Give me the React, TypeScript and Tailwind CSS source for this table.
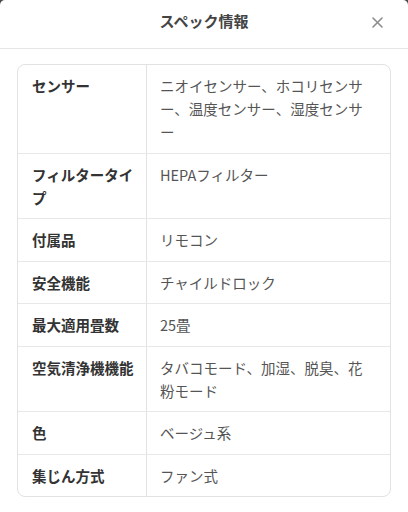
import React from 'react';

const SPECS = [
  { label: 'センサー', value: 'ニオイセンサー、ホコリセンサー、温度センサー、湿度センサー' },
  { label: 'フィルタータイプ', value: 'HEPAフィルター' },
  { label: '付属品', value: 'リモコン' },
  { label: '安全機能', value: 'チャイルドロック' },
  { label: '最大適用畳数', value: '25畳' },
  { label: '空気清浄機機能', value: 'タバコモード、加湿、脱臭、花粉モード' },
  { label: '色', value: 'ベージュ系' },
  { label: '集じん方式', value: 'ファン式' },
];

export default function App() {
  return (
    <div
      className="w-[408px] h-[512px] bg-[#4a4a4a] overflow-hidden"
      style={{ fontFamily: '"Noto Sans CJK JP", "Noto Sans", sans-serif' }}
    >
      <div className="h-full bg-white rounded-t-[5px]">
        {/* header */}
        <div className="relative flex items-center justify-center h-[49px] pb-[5px] border-b border-[#e6e6e6]">
          <h2 className="text-[15px] font-bold text-[#444]">スペック情報</h2>
          <button className="absolute right-[25px] top-[17px] text-[#8c8c8c]" aria-label="閉じる">
            <svg width="11" height="11" viewBox="0 0 11 11" fill="none" stroke="currentColor" strokeWidth="1.6" strokeLinecap="round">
              <path d="M1 1L10 10M10 1L1 10" />
            </svg>
          </button>
        </div>

        {/* spec table */}
        <div className="mx-[17px] mt-[15px] border border-[#e2e2e2] rounded-[8px] overflow-hidden">
          {SPECS.map((s, i) => (
            <div key={s.label} className={`flex ${i > 0 ? 'border-t border-[#e8e8e8]' : ''}`}>
              <div className="w-[129px] shrink-0 border-r border-[#e2e2e2] pl-[14px] pr-[12px] pt-[9px] pb-[9.5px] text-[14.5px] leading-[23px] font-bold text-[#333] [line-break:loose]">
                {s.label}
              </div>
              <div className="flex-1 pl-[13px] pr-[14px] pt-[9px] pb-[9.5px] text-[14.5px] leading-[23px] text-[#555] [line-break:loose]">
                {s.value}
              </div>
            </div>
          ))}
        </div>
      </div>
    </div>
  );
}
